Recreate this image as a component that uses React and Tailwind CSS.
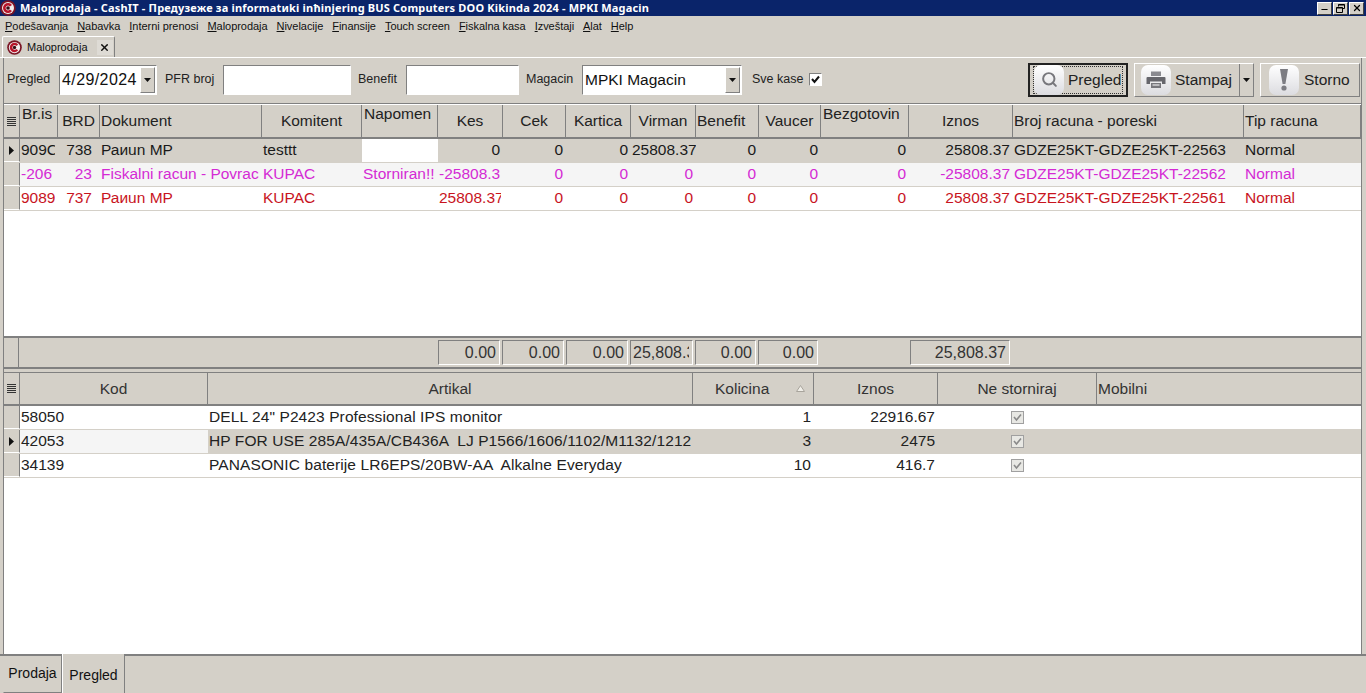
import { Search, Minus, X } from 'lucide-react';

const FONT = "font-['Liberation_Sans','Noto_Sans',sans-serif]";

const mainCols = 'grid-cols-[16px_38px_42px_162px_100px_76px_65px_63px_65px_65px_63px_62px_88px_104px_231px_1fr]';
const itemCols = 'grid-cols-[16px_188px_485px_121px_124px_159px_1fr]';

const menu = [
  ['P', 'odešavanja'],
  ['N', 'abavka'],
  ['I', 'nterni prenosi'],
  ['M', 'aloprodaja'],
  ['N', 'ivelacije'],
  ['F', 'inansije'],
  ['T', 'ouch screen'],
  ['F', 'iskalna kasa'],
  ['I', 'zveštaji'],
  ['A', 'lat'],
  ['H', 'elp'],
];

const mainHead = [
  ['Br.is', 'top'], ['BRD', 'center'], ['Dokument', 'left'], ['Komitent', 'center'], ['Napomen', 'top'],
  ['Kes', 'center'], ['Cek', 'center'], ['Kartica', 'center'], ['Virman', 'center'], ['Benefit', 'left'],
  ['Vaucer', 'center'], ['Bezgotovin', 'top'], ['Iznos', 'center'], ['Broj racuna - poreski', 'left'], ['Tip racuna', 'left'],
];

const mainRows = [
  {
    bg: 'bg-[#d4d0c8]', color: 'text-[#1a1a1a]', current: true,
    cells: ['909C', '738', 'Раиun MP', 'testtt', '', '0', '0', '0', '25808.37', '0', '0', '0', '25808.37', 'GDZE25KT-GDZE25KT-22563', 'Normal'],
  },
  {
    bg: 'bg-[#f5f5f5]', color: 'text-[#d42ad4]',
    cells: ['-206', '23', 'Fiskalni racun - Povrac', 'KUPAC', 'Storniran!!', '-25808.3', '0', '0', '0', '0', '0', '0', '-25808.37', 'GDZE25KT-GDZE25KT-22562', 'Normal'],
  },
  {
    bg: 'bg-white', color: 'text-[#c8141e]',
    cells: ['9089', '737', 'Раиun MP', 'KUPAC', '', '25808.37', '0', '0', '0', '0', '0', '0', '25808.37', 'GDZE25KT-GDZE25KT-22561', 'Normal'],
  },
];

const mainAlign = ['left', 'right', 'left', 'left', 'left', 'right', 'right', 'right', 'right', 'right', 'right', 'right', 'right', 'left', 'left'];

const items = [
  { code: '58050', name: 'DELL 24" P2423 Professional IPS monitor', qty: '1', sum: '22916.67' },
  { code: '42053', name: 'HP FOR USE 285A/435A/CB436A  LJ P1566/1606/1102/M1132/1212', qty: '3', sum: '2475', current: true },
  { code: '34139', name: 'PANASONIC baterije LR6EPS/20BW-AA  Alkalne Everyday', qty: '10', sum: '416.7' },
];

const sunken = 'border border-t-[#808080] border-l-[#808080] border-r-white border-b-white';

function Logo({ size = 16 }) {
  return (
    <svg width={size} height={size} viewBox="0 0 16 16" className="shrink-0">
      <circle cx="8" cy="8" r="7.8" fill="#7a1424" />
      <circle cx="8" cy="8" r="6" fill="#f2eeee" />
      <path d="M12 5A5 5 0 1 0 12 11L9.8 9.6A2.4 2.4 0 1 1 9.8 6.4Z" fill="#b8142a" />
      <circle cx="8" cy="8" r="1.8" fill="#3a0c14" />
    </svg>
  );
}

function ColumnsIcon() {
  return (
    <svg width="9" height="9" viewBox="0 0 9 9">
      <path d="M0 .5h9M0 2.5h9M0 4.5h9M0 6.5h9M0 8.5h9" stroke="#333" />
    </svg>
  );
}

function Arrow() {
  return (
    <svg width="5" height="9" viewBox="0 0 5 9">
      <path d="M0 0l5 4.5L0 9z" fill="#111" />
    </svg>
  );
}

function DropArrow() {
  return (
    <svg width="7" height="4" viewBox="0 0 7 4">
      <path d="M0 0h7L3.5 4z" fill="#111" />
    </svg>
  );
}

function WinButton({ children }) {
  return (
    <div className="flex h-[13px] w-[15px] items-center justify-center border border-t-white border-l-white border-r-[#404040] border-b-[#404040] bg-[#d4d0c8] text-black">
      {children}
    </div>
  );
}

function TitleBar() {
  return (
    <div className="flex h-4 items-center bg-[#0a246a] pr-[2px]">
      <Logo size={16} />
      <div className="ml-[4px] flex-1 whitespace-nowrap text-[11px] font-bold leading-4 tracking-[0.18px] text-white font-['Noto_Sans',sans-serif]">
        Maloprodaja - CashIT - Предузеже за informatиki inћinjering BUS Computers DOO Kikinda 2024 - MPKI Magacin
      </div>
      <div className="flex gap-[1px]">
        <WinButton><Minus size={9} strokeWidth={3} className="mt-[3px]" /></WinButton>
        <WinButton>
          <svg width="9" height="9" viewBox="0 0 9 9">
            <path d="M2.5 2.5V.5h6v4h-2M.5 3.5h6v5h-6zM.5 4h6M2.5 1h6" fill="none" stroke="#000" />
          </svg>
        </WinButton>
        <WinButton><X size={10} strokeWidth={3} /></WinButton>
      </div>
    </div>
  );
}

function MenuBar() {
  return (
    <div className="flex h-5 items-center gap-[9px] pl-[5px] text-[11px] tracking-[-0.04px] text-[#111]">
      {menu.map(([first, rest], i) => (
        <span key={i} className="whitespace-nowrap">
          <span className="underline">{first}</span>{rest}
        </span>
      ))}
    </div>
  );
}

function DocTab() {
  return (
    <div className="flex h-[22px] items-end border-b border-white">
      <div className="ml-[2px] flex h-[21px] w-[113px] items-center rounded-t-[2px] border border-b-0 border-t-white border-l-white border-r-[#808080] pl-1 text-[11px] text-[#111]">
        <Logo size={15} />
        <span className="ml-[5px]">Maloprodaja</span>
        <span className="ml-[9px] flex h-[15px] w-[16px] items-center justify-center bg-[#dedbd5]">
          <X size={11} strokeWidth={3} />
        </span>
      </div>
    </div>
  );
}

function Input({ w }) {
  return <div className={`h-[30px] bg-white ${sunken} ${w}`} />;
}

function Combo({ w, text, textClass }) {
  return (
    <div className={`flex h-[30px] items-center bg-white pl-[2px] text-[#111] ${sunken} ${w}`}>
      <span className={`flex-1 whitespace-nowrap ${textClass}`}>{text}</span>
      <span className="mr-[1px] flex h-[26px] w-[15px] items-center justify-center border border-t-white border-l-white border-r-[#808080] border-b-[#808080] bg-[#d4d0c8]">
        <DropArrow />
      </span>
    </div>
  );
}

function IconTile({ children }) {
  return (
    <span className="flex h-[30px] w-[30px] shrink-0 items-center justify-center rounded-[7px] bg-gradient-to-b from-white to-[#dcdce0] text-[#77777c]">
      {children}
    </span>
  );
}

function PrinterIcon() {
  return (
    <svg width="20" height="20" viewBox="0 0 20 20">
      <path d="M5 1.5h10V6H5z" fill="#8a8a90" />
      <path d="M1.5 7h17a1 1 0 0 1 1 1v6h-3.5v-2.5H4V14H.5V8a1 1 0 0 1 1-1z" fill="#66666c" />
      <path d="M5 13h10v5H5z" fill="#77777c" />
      <path d="M6.5 15h7" stroke="#d8d8dc" strokeWidth="1.4" />
    </svg>
  );
}

function WarnIcon() {
  return (
    <svg width="10" height="22" viewBox="0 0 10 22">
      <path d="M1 0h8L6.4 15H3.6z" fill="#7c7c82" />
      <circle cx="5" cy="19" r="2.6" fill="#7c7c82" />
    </svg>
  );
}

function Toolbar() {
  return (
    <div className="flex h-[46px] items-center border-b border-[#808080] pb-[2px] pl-[3px] pr-[1px] text-[12.5px] text-[#222]">
      <span className="w-[52px]">Pregled</span>
      <Combo w="w-[98px]" text="4/29/2024" textClass="text-[16px] tracking-[0.4px]" />
      <span className="ml-2 w-[58px]">PFR broj</span>
      <Input w="w-[128px]" />
      <span className="ml-[7px] w-[48px]">Benefit</span>
      <Input w="w-[113px]" />
      <span className="ml-[7px] w-[56px]">Magacin</span>
      <Combo w="w-[160px]" text="MPKI Magacin" textClass="text-[15.5px]" />
      <span className="ml-[10px] w-[57px]">Sve kase</span>
      <span className={`flex h-[13px] w-[13px] items-center justify-center bg-white ${sunken}`}>
        <svg width="9" height="9" viewBox="0 0 9 9">
          <path d="M1 4l2.5 3L8 1.5" fill="none" stroke="#111" strokeWidth="2" />
        </svg>
      </span>
      <div className="ml-auto flex items-center gap-[6px] text-[15.5px]">
        <div className="flex h-[34px] w-[100px] items-center border-2 border-[#222] bg-[#d4d0c8] px-[3px]">
          <div className="flex h-[28px] flex-1 items-center border border-dotted border-[#333]">
            <IconTile><Search size={17} strokeWidth={2.8} /></IconTile>
            <span className="ml-[4px]">Pregled</span>
          </div>
        </div>
        <div className="flex h-[34px] w-[120px] items-center border border-t-white border-l-white border-r-[#808080] border-b-[#808080] pl-[6px]">
          <IconTile><PrinterIcon /></IconTile>
          <span className="ml-[4px] flex-1">Stampaj</span>
          <span className="flex h-full w-[14px] items-center justify-center border-l border-[#808080]"><DropArrow /></span>
        </div>
        <div className="flex h-[34px] w-[100px] items-center border border-t-white border-l-white border-r-[#808080] border-b-[#808080] pl-[8px]">
          <IconTile><WarnIcon /></IconTile>
          <span className="ml-[5px]">Storno</span>
        </div>
      </div>
    </div>
  );
}

function HeadCell({ pos, children }) {
  const place = {
    top: 'items-start justify-start pl-[2px] leading-[18px]',
    center: 'items-center justify-center',
    left: 'items-center justify-start pl-[1px]',
  }[pos];
  return (
    <div className={`flex overflow-hidden whitespace-nowrap border-r border-[#808080] ${place}`}>
      {children}
    </div>
  );
}

function IndicatorCell({ current }) {
  return (
    <div className="flex items-center justify-center border-r border-b border-r-[#808080] border-b-white bg-[#d4d0c8]">
      {current && <Arrow />}
    </div>
  );
}

function MainGrid() {
  return (
    <div className="flex h-[234px] flex-col border-b-2 border-[#808080] bg-white">
      <div className={`grid h-[35px] border-t border-b-2 border-t-white border-b-[#808080] bg-[#d4d0c8] text-[15.5px] text-[#222] ${mainCols}`}>
        <div className="flex items-center justify-center border-r border-[#808080]"><ColumnsIcon /></div>
        {mainHead.map(([label, pos], i) => (
          <HeadCell key={i} pos={pos}>{label}</HeadCell>
        ))}
      </div>
      {mainRows.map((row, r) => (
        <div key={r} className={`grid h-[24px] border-b border-[#d4d0c8] text-[15.5px] leading-[22px] ${row.bg} ${row.color} ${mainCols}`}>
          <IndicatorCell current={row.current} />
          {row.cells.map((cell, c) => {
            const clipped = (c === 8 && r === 0) || (c === 5 && r > 0);
            const align = clipped ? 'text-left pl-[1px]' : mainAlign[c] === 'right' ? 'text-right pr-[3px]' : 'pl-[1px]';
            const white = r === 0 && c === 4 ? 'bg-white' : '';
            const inset = c === 0 ? 'mr-[3px]' : c === 1 ? 'pr-[8px]' : c === 5 && clipped ? 'mr-[2px]' : '';
            return (
              <div key={c} className={`overflow-hidden whitespace-pre ${align} ${white} ${inset}`}>
                {cell}
              </div>
            );
          })}
        </div>
      ))}
    </div>
  );
}

function FooterBox({ w, ml, children }) {
  return (
    <div className={`flex h-[25px] items-center justify-end pr-[3px] ${sunken} ${w} ${ml || ''}`}>
      {children}
    </div>
  );
}

function Totals() {
  return (
    <div className="flex h-[31px] items-center border-b-2 border-[#808080] text-[16px] text-[#333]">
      <div className="h-full w-[15px] border-r border-[#808080]" />
      <FooterBox w="w-[62px]" ml="ml-[419px]">0.00</FooterBox>
      <FooterBox w="w-[62px]" ml="ml-[2px]">0.00</FooterBox>
      <FooterBox w="w-[62px]" ml="ml-[2px]">0.00</FooterBox>
      <FooterBox w="w-[63px]" ml="ml-[2px]"><span className="w-full overflow-hidden whitespace-nowrap pl-[2px]">25,808.37</span></FooterBox>
      <FooterBox w="w-[61px]" ml="ml-[2px]">0.00</FooterBox>
      <FooterBox w="w-[60px]" ml="ml-[2px]">0.00</FooterBox>
      <FooterBox w="w-[100px]" ml="ml-[92px]">25,808.37</FooterBox>
    </div>
  );
}

function ItemsGrid() {
  return (
    <div className="mt-[3px] flex flex-1 flex-col bg-white">
      <div className={`grid h-[34px] border-t border-b-2 border-t-[#808080] border-b-[#808080] bg-[#d4d0c8] text-[15.5px] text-[#333] ${itemCols}`}>
        <div className="flex items-center justify-center border-r border-[#808080]"><ColumnsIcon /></div>
        <HeadCell pos="center">Kod</HeadCell>
        <HeadCell pos="center">Artikal</HeadCell>
        <div className="flex items-center border-r border-[#808080] pl-[22px]">
          <span>Kolicina</span>
          <svg width="9" height="7" viewBox="0 0 9 7" className="ml-[27px]">
            <path d="M4.5.5L8.5 6.5H.5z" fill="#f0eee8" stroke="#a8a49c" />
          </svg>
        </div>
        <HeadCell pos="center">Iznos</HeadCell>
        <HeadCell pos="center">Ne storniraj</HeadCell>
        <div className="flex items-center pl-[1px]">Mobilni</div>
      </div>
      {items.map((item) => {
        const rowBg = item.current ? 'bg-[#d4d0c8]' : 'bg-white';
        return (
          <div key={item.code} className={`grid h-[24px] border-b border-[#d4d0c8] text-[15.5px] leading-[22px] text-[#222] ${rowBg} ${itemCols}`}>
            <IndicatorCell current={item.current} />
            <div className={`pl-[1px] ${item.current ? 'bg-[#f5f5f5]' : ''}`}>{item.code}</div>
            <div className="overflow-hidden whitespace-pre pl-[1px] tracking-[0.1px]">{item.name}</div>
            <div className="pr-[3px] text-right">{item.qty}</div>
            <div className="pr-[3px] text-right">{item.sum}</div>
            <div className="flex items-center justify-center pr-[1px]">
              <span className="flex h-[13px] w-[13px] items-center justify-center border border-[#a0a0a0] bg-[#e8e8e4]">
                <svg width="9" height="9" viewBox="0 0 9 9">
                  <path d="M1 4l2.5 3L8 1.5" fill="none" stroke="#8a8a8a" strokeWidth="1.6" />
                </svg>
              </span>
            </div>
            <div />
          </div>
        );
      })}
    </div>
  );
}

function BottomTabs() {
  return (
    <div className="flex h-[39px] border-t-2 border-[#808080] pl-[3px] text-[14px] text-[#111]">
      <div className="flex h-[37px] w-[59px] items-center justify-center border-x border-b border-[#808080] border-l-[#d4d0c8] pb-[1px]">Prodaja</div>
      <div className="-mt-[2px] flex h-[39px] w-[63px] items-center justify-center border-r border-[#808080] border-l border-l-white bg-[#d4d0c8] pt-[3px]">Pregled</div>
    </div>
  );
}

export default function App() {
  return (
    <div className={`flex h-[693px] w-[1366px] flex-col overflow-hidden bg-[#d4d0c8] ${FONT}`}>
      <TitleBar />
      <MenuBar />
      <DocTab />
      <div className="flex flex-1 flex-col pl-[3px] pr-[4px]">
        <div className="flex flex-1 flex-col border-x border-[#808080]">
          <Toolbar />
          <MainGrid />
          <Totals />
          <ItemsGrid />
        </div>
      </div>
      <BottomTabs />
    </div>
  );
}
